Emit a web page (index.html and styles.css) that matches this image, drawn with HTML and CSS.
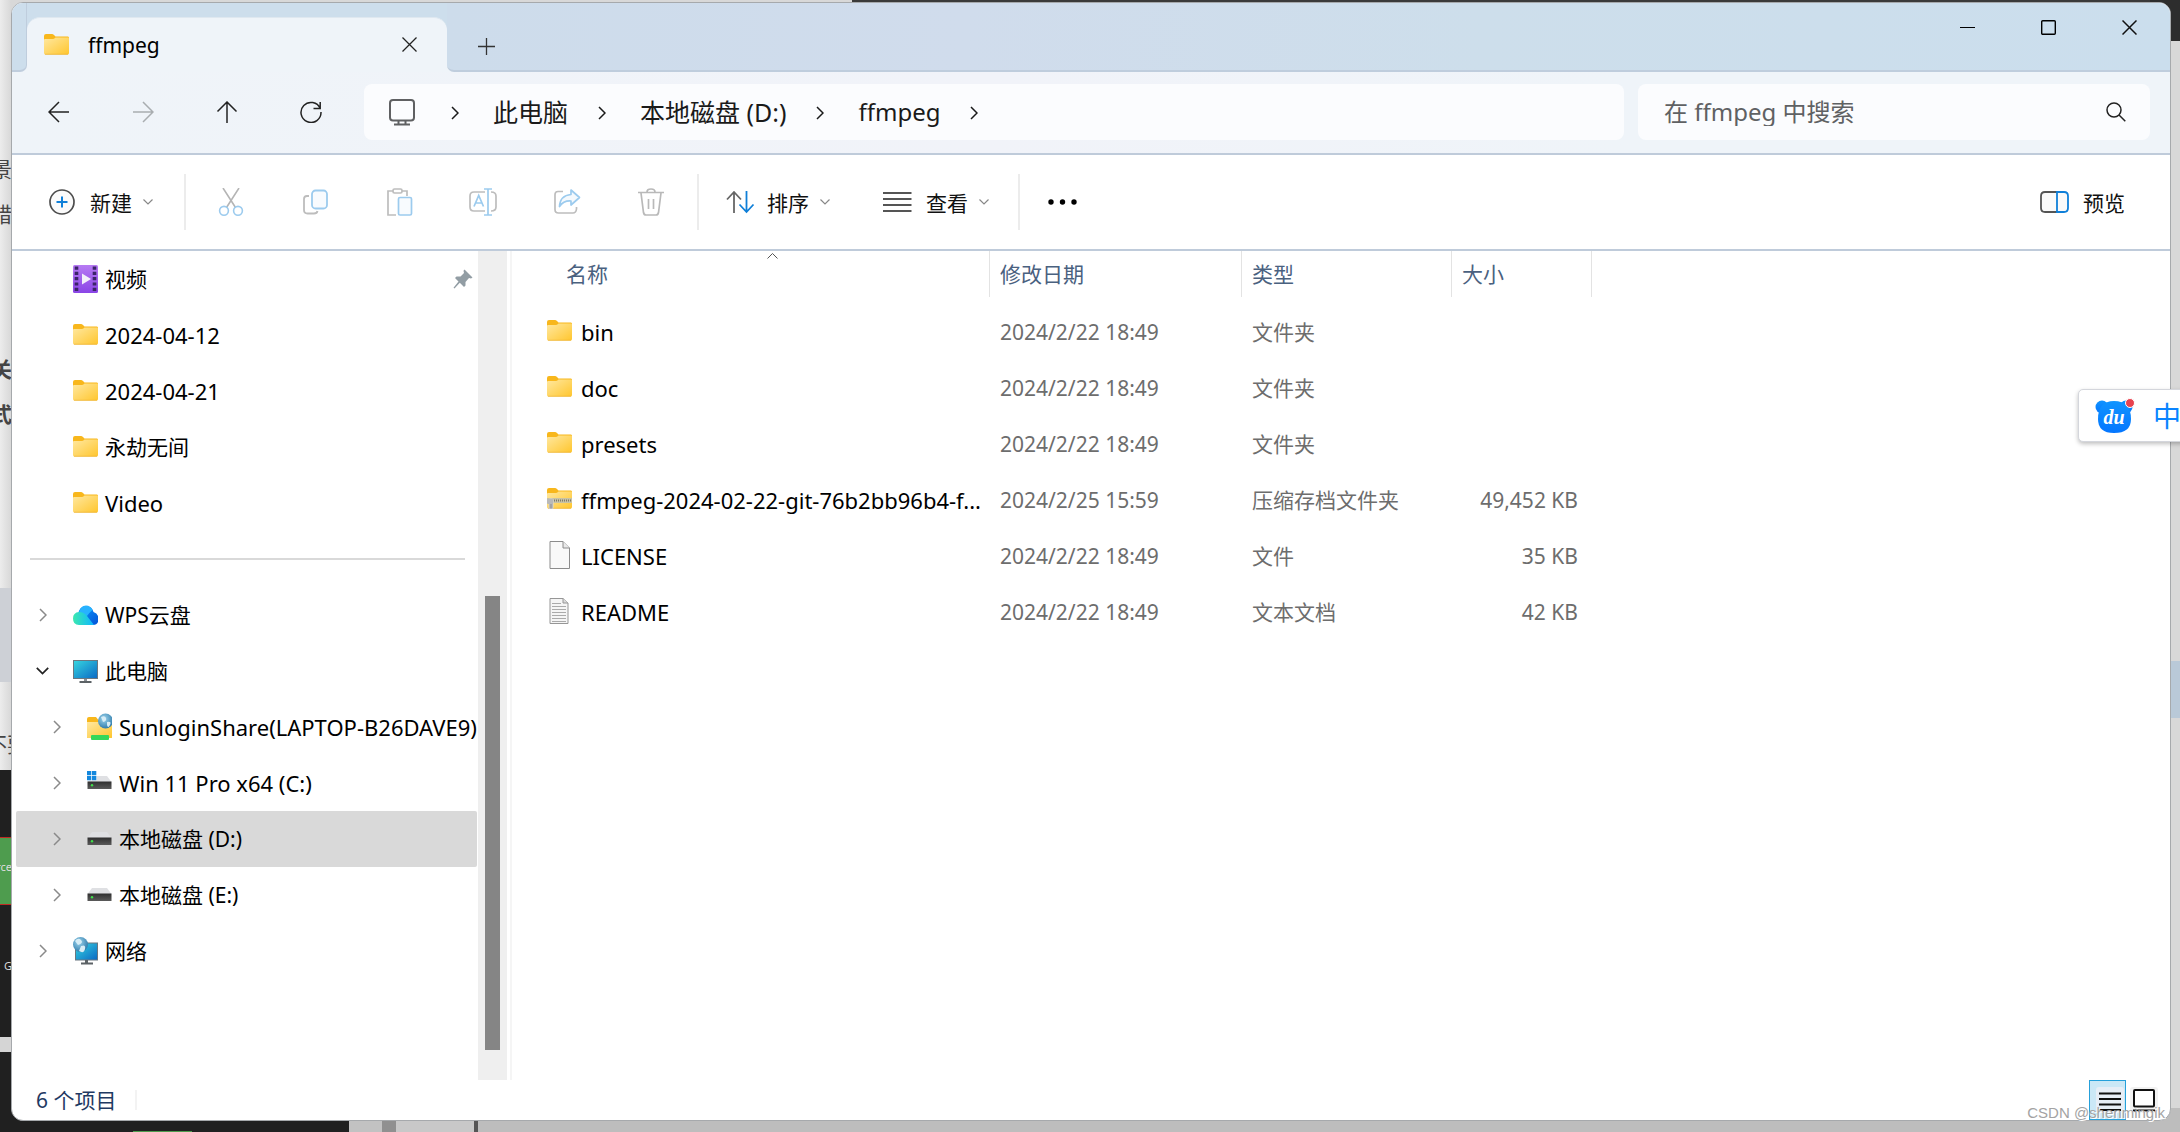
FILE: index.html
```html
<!DOCTYPE html>
<html lang="zh-CN">
<head>
<meta charset="utf-8">
<title>ffmpeg</title>
<link rel="stylesheet" href="styles.css">
</head>
<body>
<svg class="defs" aria-hidden="true">
  <defs>
    <linearGradient id="g-folder" x1="0" y1="0" x2="1" y2="1"><stop offset="0" stop-color="#ffe8a0"/><stop offset="1" stop-color="#ffc62e"/></linearGradient>
    <linearGradient id="g-screen" x1="0" y1="0" x2="1" y2="1"><stop offset="0" stop-color="#36d6e0"/><stop offset="1" stop-color="#0a68c4"/></linearGradient>
    <linearGradient id="g-video" x1="0" y1="0" x2="0" y2="1"><stop offset="0" stop-color="#b77bf3"/><stop offset="1" stop-color="#8a45e6"/></linearGradient>
    <linearGradient id="g-cloud" x1="0" y1="0" x2="1" y2="0"><stop offset="0" stop-color="#3be8b0"/><stop offset="1" stop-color="#0fb6ff"/></linearGradient>
    <linearGradient id="g-cloud2" x1="0" y1="0" x2="1" y2="1"><stop offset="0" stop-color="#0a9cff"/><stop offset="1" stop-color="#0352d6"/></linearGradient>
    <linearGradient id="g-drive" x1="0" y1="0" x2="0" y2="1"><stop offset="0" stop-color="#2f2f2f"/><stop offset="1" stop-color="#5a5a5a"/></linearGradient>
    <radialGradient id="g-globe" cx="0.4" cy="0.35" r="0.7"><stop offset="0" stop-color="#9fd6ee"/><stop offset="1" stop-color="#2a77a8"/></radialGradient>
    <linearGradient id="g-du" x1="0" y1="0" x2="0" y2="1"><stop offset="0" stop-color="#1094ff"/><stop offset="1" stop-color="#0476ff"/></linearGradient>
  </defs>
  <symbol id="folder" viewBox="0 0 25 21">
    <path d="M0 2Q0 0 2 0H8Q9 0 10 1L11.500 2.500H24Q25 2.500 25 4V9H0Z" fill="#f8b71c"/>
    <path d="M0 6Q0 5 1 5H9Q10 5 11 4L11.500 3.500H24Q25 3.500 25 4.500V19Q25 20.500 23.500 20.500H1.500Q0 20.500 0 19Z" fill="url(#g-folder)"/>
    <path d="M1 20.300H24" stroke="#edb02c" stroke-width="0.700"/>
  </symbol>
  <symbol id="zip" viewBox="0 0 25 21">
    <use href="#folder" width="25" height="21"/>
    <path d="M0 10H25V15H0Z" fill="#c9c3a4"/><path d="M5 12.500H25" stroke="#7d7a6c" stroke-width="2" stroke-dasharray="1 1"/>
    <rect x="2" y="11" width="4" height="10" rx="1" fill="#a3a3a3" stroke="#dcdcdc" stroke-width="0.800"/><rect x="0" y="11" width="6" height="5" rx="1" fill="#b9b9b9"/>
  </symbol>
  <symbol id="file" viewBox="0 0 25 28">
    <path d="M3 .5H16L22.500 7V27.500H3Z" fill="#f9f9f9" stroke="#8c8c8c"/><path d="M16 .5V7H22.500" fill="#e9e9e9" stroke="#8c8c8c"/>
  </symbol>
  <symbol id="text" viewBox="0 0 25 28">
    <path d="M3 1.500H16L21 6V26.500H3Z" fill="#f5f5f5" stroke="#969696"/><path d="M16 1.500V6H21" fill="#dadada" stroke="#969696"/>
    <path d="M5 6.500H14M5 9.500H19M5 12.500H19M5 15.500H19M5 18.500H19M5 21.500H19M5 24.500H19" stroke="#aaa"/>
  </symbol>
  <symbol id="drive" viewBox="0 0 25 25">
    <path d="M5 5H20L24.500 11H.5Z" fill="#dfe0e3"/><rect x="0.500" y="10.500" width="24" height="7.500" fill="url(#g-drive)"/><circle cx="5" cy="14.300" r="1.200" fill="#3fe04a"/>
  </symbol>
  <symbol id="pc" viewBox="0 0 25 25">
    <rect x="0.500" y="1.500" width="24" height="18" fill="url(#g-screen)" stroke="#6b7780"/><path d="M11 20H14V22H11Z" fill="#8a8f94"/><rect x="6.500" y="22" width="12" height="2" fill="#5c6266"/>
  </symbol>
  <symbol id="chev" viewBox="0 0 8 14"><path d="M1 1L7 7L1 13" fill="none" stroke="currentColor" stroke-width="1.500"/></symbol>
  <symbol id="down" viewBox="0 0 10 6"><path d="M.5 .5L5 5L9.500 .5" fill="none" stroke="currentColor" stroke-width="1.200"/></symbol>
</svg>

<div class="desktop">
  <div class="backdrop" aria-hidden="true">
    <div class="under-top"></div>
    <div class="under-right"></div>
    <div class="under-patch"></div>
    <div class="under-note"></div>
    <div class="under-dark"><i class="under-green"></i><i class="under-white"></i><i class="under-link"></i></div>
    <div class="under-bottom"></div>
    <span class="frag frag-1">景</span><span class="frag frag-2">错</span><span class="frag frag-3">关</span><span class="frag frag-4">式</span><span class="frag frag-5">不要</span>
    <span class="frag frag-6">rce</span><span class="frag frag-7">G</span>
  </div>

  <main class="window">
    <header class="titlebar">
      <div class="strip strip-left"></div>
      <div class="tab-well">
        <div class="tab">
          <svg class="tab-icon"><use href="#folder"/></svg>
          <span class="tab-name">ffmpeg</span>
          <button class="icon-btn tab-close" aria-label="关闭标签页"><svg width="15" height="15" viewBox="0 0 15 15"><path d="M.5 .5L14.500 14.500M14.500 .5L.5 14.500" stroke="#222" stroke-width="1.300"/></svg></button>
        </div>
      </div>
      <div class="strip strip-rest">
        <button class="icon-btn new-tab" aria-label="新标签页"><svg width="17" height="17" viewBox="0 0 17 17"><path d="M8.500 0V17M0 8.500H17" stroke="#333" stroke-width="1.300"/></svg></button>
        <div class="captions">
          <button class="icon-btn" aria-label="最小化"><svg width="15" height="15" viewBox="0 0 15 15"><path d="M0 7.500H15" stroke="#000"/></svg></button>
          <button class="icon-btn" aria-label="最大化"><svg width="15" height="15" viewBox="0 0 15 15"><rect x="0.700" y="0.700" width="13.600" height="13.600" rx="1" fill="none" stroke="#000" stroke-width="1.400"/></svg></button>
          <button class="icon-btn" aria-label="关闭"><svg width="15" height="15" viewBox="0 0 15 15"><path d="M.5 .5L14.500 14.500M14.500 .5L.5 14.500" stroke="#111" stroke-width="1.500"/></svg></button>
        </div>
      </div>
    </header>

    <nav class="navbar">
      <div class="nav-buttons">
        <button class="icon-btn" aria-label="后退"><svg width="22" height="22" viewBox="0 0 22 22"><path d="M21 11H1M11 1L1 11L11 21" fill="none" stroke="#222" stroke-width="1.500"/></svg></button>
        <button class="icon-btn" aria-label="前进" disabled><svg width="22" height="22" viewBox="0 0 22 22"><path d="M1 11H21M11 1L21 11L11 21" fill="none" stroke="#a9adb0" stroke-width="1.500"/></svg></button>
        <button class="icon-btn" aria-label="向上"><svg width="22" height="22" viewBox="0 0 22 22"><path d="M11 22V1M1.500 10.500L11 1L20.500 10.500" fill="none" stroke="#222" stroke-width="1.500"/></svg></button>
        <button class="icon-btn" aria-label="刷新"><svg width="22" height="22" viewBox="0 0 22 22"><path d="M20.200 7.500A10 10 0 1 0 21 11M20.200 1V7.500H13.500" fill="none" stroke="#222" stroke-width="1.500"/></svg></button>
      </div>
      <div class="address">
        <svg class="monitor" width="26" height="27" viewBox="0 0 26 27"><rect x="1" y="1" width="24" height="20.500" rx="3" fill="none" stroke="#5f6062" stroke-width="2"/><path d="M9.500 22V25M16.500 22V25M5 25.500H21" stroke="#5f6062" stroke-width="2"/></svg>
        <svg class="sep"><use href="#chev"/></svg>
        <a class="crumb" href="#pc">此电脑</a>
        <svg class="sep"><use href="#chev"/></svg>
        <a class="crumb" href="#d">本地磁盘 (D:)</a>
        <svg class="sep"><use href="#chev"/></svg>
        <a class="crumb crumb-here" href="#ffmpeg">ffmpeg</a>
        <svg class="sep"><use href="#chev"/></svg>
      </div>
      <form class="search">
        <input type="search" aria-label="搜索" placeholder="在 ffmpeg 中搜索">
        <button class="icon-btn" type="button" aria-label="搜索"><svg width="20" height="20" viewBox="0 0 20 20"><circle cx="8" cy="8" r="7" fill="none" stroke="#222" stroke-width="1.500"/><path d="M13 13L19.300 19.300" stroke="#222" stroke-width="1.500"/></svg></button>
      </form>
    </nav>

    <div class="commands">
      <button class="cmd cmd-new"><svg width="26" height="26" viewBox="0 0 26 26"><circle cx="13" cy="13" r="12" fill="#fafafa" stroke="#4d4d4d" stroke-width="1.700"/><path d="M13 7.500V18.500M7.500 13H18.500" stroke="#0f7fd8" stroke-width="2"/></svg><span>新建</span><svg class="down"><use href="#down"/></svg></button>
      <div class="tools">
        <button class="tool" aria-label="剪切" disabled><svg width="28" height="28" viewBox="0 0 28 28" fill="none" stroke-width="1.600"><path d="M6 0L18.500 19.500M22 0L9.500 19.500" stroke="#b5b5b5"/><circle cx="7" cy="22.800" r="4.400" stroke="#9ccbee"/><circle cx="21" cy="22.800" r="4.400" stroke="#9ccbee"/></svg></button>
        <button class="tool" aria-label="复制" disabled><svg width="28" height="28" viewBox="0 0 28 28" fill="none" stroke-width="1.800"><path d="M8 8H6Q3 8 3 11V22Q3 25.500 6.500 25.500H13Q16 25.500 16.500 23" stroke="#bdbdbd"/><rect x="11" y="2.500" width="15" height="18" rx="3.500" fill="#f8fbfe" stroke="#9ccbee"/></svg></button>
        <button class="tool" aria-label="粘贴" disabled><svg width="28" height="28" viewBox="0 0 28 28" fill="none" stroke-width="1.700"><path d="M8 3H3V27H11M17 3H22V8" stroke="#bdbdbd"/><rect x="8" y="1" width="9" height="4" rx="1.500" stroke="#bdbdbd"/><rect x="13.500" y="9.500" width="13" height="17.500" rx="1.500" fill="#f8fbfe" stroke="#9ccbee"/></svg></button>
        <button class="tool" aria-label="重命名" disabled><svg width="28" height="28" viewBox="0 0 28 28" fill="none" stroke-width="1.700"><path d="M16 4H5Q1 4 1 8V19Q1 23 5 23H16M22 4Q27 4 27 8V19Q27 23 22 23" stroke="#bdbdbd"/><path d="M5 18.500L9.700 7.500L14.500 18.500M6.500 15H13M19 1V27M15 1H23M15 27H23" stroke="#9ccbee"/></svg></button>
        <button class="tool" aria-label="共享" disabled><svg width="28" height="28" viewBox="0 0 28 28" fill="none" stroke-width="1.700"><path d="M10 3.500H5Q2 3.500 2 6.500V21.500Q2 25 5.500 25H20Q23 25 23.500 21V19" stroke="#bdbdbd"/><path d="M18 2L26.500 9.500L18 17V13Q10.500 12.500 6.500 18.500Q7 7.500 18 6.500Z" fill="#f4f9fd" stroke="#9ccbee" stroke-linejoin="round"/></svg></button>
        <button class="tool" aria-label="删除" disabled><svg width="28" height="28" viewBox="0 0 28 28" fill="none" stroke="#b9b9b9" stroke-width="1.700"><path d="M1 4.500H27M4 5L6.500 24.500Q7 27 9 27H19Q21 27 21.500 24.500L24 5M10 4Q10 1 14 1T18 4M11.500 11V21M16.500 11V21"/></svg></button>
      </div>
      <button class="cmd cmd-sort"><svg width="29" height="24" viewBox="0 0 29 24" fill="none" stroke-width="1.800"><path d="M8 23V2M1 9.500L8 2L15 9.500" stroke="#666"/><path d="M20.500 1V22M13.500 14.500L20.500 22L27.500 14.500" stroke="#0f7fd8"/></svg><span>排序</span><svg class="down"><use href="#down"/></svg></button>
      <button class="cmd cmd-view"><svg width="29" height="20" viewBox="0 0 29 20"><path d="M0 1H28.500M0 7H28.500M0 13H28.500M0 19H28.500" stroke="#555" stroke-width="1.800"/></svg><span>查看</span><svg class="down"><use href="#down"/></svg></button>
      <button class="cmd cmd-more" aria-label="更多"><svg width="29" height="6" viewBox="0 0 29 6"><circle cx="3" cy="3" r="2.700"/><circle cx="14.500" cy="3" r="2.700"/><circle cx="26" cy="3" r="2.700"/></svg></button>
      <button class="cmd cmd-preview"><svg width="29" height="22" viewBox="0 0 29 22" fill="#fafafa" stroke-width="1.800"><path d="M17 1H5Q1 1 1 5V17Q1 21 5 21H17" stroke="#555"/><path d="M17 1H24Q28 1 28 5V17Q28 21 24 21H17Z" stroke="#0f7fd8"/></svg><span>预览</span></button>
    </div>

    <div class="content">
      <aside class="sidebar">
        <ul class="tree">
          <li><a class="node" href="#video"><svg class="node-icon tall" viewBox="0 0 25 28"><rect width="25" height="28" rx="1.500" fill="url(#g-video)"/><path d="M3.500 1.500V28M21.500 1.500V28" stroke="#3b2468" stroke-width="3.600" stroke-dasharray="3.200 2.100"/><path d="M9 8.500L18 14L9 19.500Z" fill="#f3f0fa"/></svg><span>视频</span><svg class="pin" width="20" height="20" viewBox="0 0 20 20"><path d="M11.500 .5L19.500 8.500L18 9.500L16 9L12.500 13L12.500 16.500L11 18L6.800 13.800L1.500 19.500L.5 18.800L5.500 12.500L2 9L3.500 7.500L7.500 7.500L11 4L10.500 1.800Z" fill="#929da4"/></svg></a></li>
          <li><a class="node latin" href="#1"><svg class="node-icon flat"><use href="#folder"/></svg><span>2024-04-12</span></a></li>
          <li><a class="node latin" href="#2"><svg class="node-icon flat"><use href="#folder"/></svg><span>2024-04-21</span></a></li>
          <li><a class="node" href="#3"><svg class="node-icon flat"><use href="#folder"/></svg><span>永劫无间</span></a></li>
          <li><a class="node latin" href="#4"><svg class="node-icon flat"><use href="#folder"/></svg><span>Video</span></a></li>
          <li class="divider"></li>
          <li><a class="node" href="#wps"><svg class="twist"><use href="#chev"/></svg><svg class="node-icon" viewBox="0 0 25 25"><path d="M5 12Q6 3 13 3Q19 3 20.500 9Q26 11 25.500 17Q25 22 20 22H9Z" fill="url(#g-cloud2)"/><path d="M6 10Q7.500 2.500 13 2.500Q17.500 2.500 19.500 7Q17 9 14 13L8 12Z" fill="#27b2ff"/><path d="M6 9Q11 9 14 13L21 22H6Q0 22 0 15.500Q0 9.500 6 9Z" fill="url(#g-cloud)"/></svg><span>WPS云盘</span></a></li>
          <li><a class="node" href="#pc"><svg class="twist twist-open" width="13" height="8" viewBox="0 0 13 8"><path d="M.8 .8L6.500 6.500L12.200 .8" fill="none" stroke="#222" stroke-width="1.700"/></svg><svg class="node-icon"><use href="#pc"/></svg><span>此电脑</span></a></li>
          <li><a class="node sub latin" href="#share"><svg class="twist"><use href="#chev"/></svg><svg class="node-icon tall" viewBox="0 0 25 28"><path d="M0 6Q0 4 2 4H9L11 6.500H25V24Q25 25 24 25H1Q0 25 0 24Z" fill="#f8b71c"/><path d="M0 9H25V24Q25 25 24 25H1Q0 25 0 24Z" fill="url(#g-folder)"/><circle cx="18.500" cy="8" r="7.500" fill="url(#g-globe)"/><path d="M14 4Q18 2 19 5T16 9ZM20 9Q25 8 23 12T20 12Z" fill="#d7edf6"/><rect x="4" y="22" width="18" height="5" rx="1" fill="#35d75a"/></svg><span>SunloginShare(LAPTOP-B26DAVE9)</span></a></li>
          <li><a class="node sub latin" href="#c"><svg class="twist"><use href="#chev"/></svg><svg class="node-icon" viewBox="0 0 25 25"><use href="#drive" y="0" width="25" height="25"/><rect width="9.500" height="9.500" fill="#fff"/><path d="M0 0H4.300V4.300H0ZM5 0H9.300V4.300H5ZM0 5H4.300V9.300H0ZM5 5H9.300V9.300H5Z" fill="#1387dd"/></svg><span>Win 11 Pro x64 (C:)</span></a></li>
          <li><a class="node sub selected" href="#d"><svg class="twist"><use href="#chev"/></svg><svg class="node-icon"><use href="#drive"/></svg><span>本地磁盘 (D:)</span></a></li>
          <li><a class="node sub" href="#e"><svg class="twist"><use href="#chev"/></svg><svg class="node-icon"><use href="#drive"/></svg><span>本地磁盘 (E:)</span></a></li>
          <li><a class="node" href="#net"><svg class="twist"><use href="#chev"/></svg><svg class="node-icon tall" viewBox="0 0 25 28"><rect x="2.500" y="6" width="22" height="17" fill="url(#g-screen)" stroke="#6b7780"/><path d="M12 23H15V26H12ZM8 25.500H20V27.500H8Z" fill="#5c6266"/><circle cx="7.500" cy="7.500" r="7.500" fill="url(#g-globe)"/><path d="M2 4Q5 0 8 3T5 8ZM8 9Q13 7 12 12T6 14Z" fill="#d7edf6"/></svg><span>网络</span></a></li>
        </ul>
        <div class="scrollbar"><div class="thumb"></div></div>
      </aside>

      <section class="files">
        <table>
          <colgroup><col class="c-name"><col class="c-date"><col class="c-type"><col class="c-size"></colgroup>
          <thead>
            <tr><th class="sorted" scope="col">名称<svg class="caret" width="11" height="6" viewBox="0 0 11 6"><path d="M.5 5.500L5.500 .5L10.500 5.500" fill="none" stroke="#555"/></svg></th><th scope="col">修改日期</th><th scope="col">类型</th><th scope="col">大小</th></tr>
          </thead>
          <tbody>
            <tr><td><div class="file"><svg class="file-icon"><use href="#folder"/></svg><span>bin</span></div></td><td>2024/2/22 18:49</td><td>文件夹</td><td></td></tr>
            <tr><td><div class="file"><svg class="file-icon"><use href="#folder"/></svg><span>doc</span></div></td><td>2024/2/22 18:49</td><td>文件夹</td><td></td></tr>
            <tr><td><div class="file"><svg class="file-icon"><use href="#folder"/></svg><span>presets</span></div></td><td>2024/2/22 18:49</td><td>文件夹</td><td></td></tr>
            <tr><td><div class="file"><svg class="file-icon"><use href="#zip"/></svg><span>ffmpeg-2024-02-22-git-76b2bb96b4-f...</span></div></td><td>2024/2/25 15:59</td><td>压缩存档文件夹</td><td>49,452 KB</td></tr>
            <tr><td><div class="file"><svg class="file-icon page"><use href="#file"/></svg><span>LICENSE</span></div></td><td>2024/2/22 18:49</td><td>文件</td><td>35 KB</td></tr>
            <tr><td><div class="file"><svg class="file-icon page"><use href="#text"/></svg><span>README</span></div></td><td>2024/2/22 18:49</td><td>文本文档</td><td>42 KB</td></tr>
          </tbody>
        </table>
      </section>
    </div>

    <footer class="status">
      <span class="count">6 个项目</span>
      <button class="view-btn active" aria-label="详细信息"><svg width="28" height="26" viewBox="0 0 28 26"><rect width="28" height="26" rx="3" fill="#e7eef6"/><path d="M3 6.500H25M3 12H25M3 17.500H25M3 23H25" stroke="#111" stroke-width="1.800"/></svg></button>
      <button class="view-btn" aria-label="大图标"><svg width="28" height="26" viewBox="0 0 28 26"><rect width="28" height="26" rx="3" fill="#f2f2f2"/><rect x="4" y="3" width="20" height="16.500" rx="1" fill="#fff" stroke="#111" stroke-width="2"/><path d="M3 23.500H25" stroke="#111" stroke-width="1.800"/></svg></button>
    </footer>
  </main>

  <div class="ime">
    <svg width="40" height="36" viewBox="0 0 40 36"><circle cx="7" cy="9" r="6.500" fill="url(#g-du)"/><circle cx="31" cy="9" r="6.500" fill="url(#g-du)"/><path d="M19 3Q36 3 36 21Q36 35 19 35Q3 35 3 21Q3 3 19 3Z" fill="url(#g-du)"/><circle cx="35" cy="5" r="4.500" fill="#e8434f" stroke="#fff"/><text x="19" y="26" class="du" text-anchor="middle">du</text></svg>
    <span>中</span>
  </div>
  <div class="watermark">CSDN @shenmingik</div>
</div>
</body>
</html>
```
FILE: styles.css
```css
* { box-sizing: border-box; }

body {
  margin: 0;
  font-family: "Noto Sans", "Noto Sans CJK SC", sans-serif;
  font-size: 21px;
  line-height: 28px;
  color: #000;
}

button { font: inherit; color: inherit; background: none; border: 0; padding: 0; }
a { color: inherit; text-decoration: none; }
svg { display: block; flex: none; }
.defs { position: absolute; width: 0; height: 0; }

.desktop {
  position: relative;
  display: flex;
  min-height: 100vh;
  padding: 2px 9px 11px 11px;
  overflow: hidden;
  background: #dcdcdc;
}

/* windows that show round the edges of the explorer */
.backdrop, .backdrop > * { position: absolute; }
.backdrop { inset: 0; overflow: hidden; background: linear-gradient(90deg, #ececec, #d8d8d8 11px); }
.under-top { top: 0; left: 852px; right: 0; height: 12px; background: #3a3a3a; }
.under-right { top: 0; right: 0; width: 30px; height: 41px; background: #2d2d2d; }
.under-patch { top: 661px; right: 0; width: 30px; height: 57px; background: #b9c9d8; }
.under-note { top: 588px; left: 0; width: 30px; height: 94px; background: #cdd0d6; }
.under-dark { top: 770px; bottom: 0; left: 0; width: 349px; background: #202020; }
.under-dark i { position: absolute; left: 0; width: 30px; }
.under-green { top: 67px; height: 68px; background: #4e9c4e; border-block: 1px solid #c02a22; }
.under-white { top: 267px; height: 15px; background: #d5d5d5; }
.under-dark .under-link { left: 133px; bottom: 0; width: 59px; height: 1px; background: #4e9c4e; }
.under-bottom { left: 349px; right: 0; bottom: 0; height: 24px; background: linear-gradient(90deg, #c2c2c2 33px, #909090 33px 47px, #c8c8c8 47px 125px, #555 125px 129px, #bdbdbd 129px); }
.frag { right: calc(100% - 12px); color: #444; white-space: nowrap; }
.frag-1 { top: 155px; }
.frag-2 { top: 200px; }
.frag-3 { top: 355px; font-weight: 700; }
.frag-4 { top: 400px; font-weight: 700; }
.frag-5 { top: 730px; right: calc(100% - 28px); }
.frag-6, .frag-7 { color: #ddd; font-size: 11px; }
.frag-6 { top: 853px; }
.frag-7 { top: 952px; }

.window {
  position: relative;
  flex: 1;
  display: flex;
  flex-direction: column;
  min-width: 0;
  background: #fff;
  border: 1px solid #a6a9ac;
  border-radius: 12px;
  overflow: hidden;
}

/* title bar */
.titlebar { display: flex; height: 69px; background: #eff4f9; }
.strip { background: #cddeec; border-bottom: 2px solid #bfcddd; }
.strip-left { width: 15px; border-right: 1px solid #bfcddd; border-bottom-right-radius: 7px; }
.strip-rest {
  flex: 1;
  display: flex;
  align-items: flex-start;
  justify-content: space-between;
  border-bottom-left-radius: 7px;
  background: linear-gradient(90deg, #cddceb, #d0dcec 30%, #cddeeb 60%, #cbdeed);
}
.tab-well { width: 420px; padding-top: 14px; background: linear-gradient(#cddeec 35px, #eff4f9 35px); }
.tab {
  display: flex;
  align-items: center;
  height: 55px;
  padding: 0 30px 2px 17px;
  background: #eff4f9;
  border-top: 1px solid #dfe8f0;
  border-radius: 13px 13px 0 0;
}
.tab-icon { width: 25px; height: 21px; margin-right: 19px; }
.tab-name { padding-top: 2px; }
.tab-close { margin-left: auto; }
.icon-btn { display: flex; align-items: center; justify-content: center; }
.new-tab { margin: 35px 0 0 31px; }
.captions { display: flex; padding: 17px 33px 0 0; gap: 66px; }

/* navigation */
.navbar {
  display: flex;
  align-items: center;
  height: 83px;
  padding: 0 20px 1px 36px;
  background: linear-gradient(90deg, #eff4f9, #f1f3f9 45%, #eff4f9 75%);
  border-bottom: 2px solid #bfcbda;
  font-size: 24px;
}
.nav-buttons { display: flex; gap: 62px; width: 316px; }
.address, .search { display: flex; align-items: center; height: 56px; background: #fbfcfe; border-radius: 8px; }
.address { flex: 1; padding-left: 25px; color: #1a1a1a; font-size: 25px; }
.crumb-here { font-size: 24px; }
.sep { width: 8px; height: 14px; margin: 2px 34px 0 30px; }
.monitor + .sep { margin-left: 36px; }
.search { width: 512px; margin-left: 14px; padding: 0 24px 0 26px; }
.search input {
  flex: 1;
  min-width: 0;
  padding: 0;
  border: 0;
  outline: 0;
  background: none;
  font: inherit;
}
.search input::placeholder { color: #5f6163; opacity: 1; }

/* command bar */
.commands { display: flex; align-items: center; height: 96px; border-bottom: 2px solid #bfcbda; }
.cmd { display: flex; align-items: center; height: 56px; color: #111; }
.cmd span { margin: 2px 11px 0 14px; }
.down { width: 10px; height: 6px; color: #888; }
.cmd-new { width: 174px; padding-left: 37px; border-right: 2px solid #ececec; }
.cmd-new span { margin-left: 15px; }
.tools { display: flex; align-items: center; gap: 56px; height: 56px; width: 513px; padding-left: 31px; border-right: 2px solid #ececec; }
.tool { height: 28px; }
.cmd-sort { width: 157px; padding-left: 27px; }
.cmd-sort span { margin-left: 12px; }
.cmd-view { width: 164px; padding-left: 27px; border-right: 2px solid #ececec; }
.cmd-more { padding-left: 28px; }
.cmd-preview { margin: 0 34px 0 auto; }
.cmd-preview span { margin-right: 11px; }

/* body */
.content { flex: 1; display: flex; min-height: 0; }
.sidebar { display: flex; width: 500px; border-right: 2px solid #f5f5f5; padding-right: 3px; }
.tree { flex: 1; min-width: 0; margin: 0; padding: 0 1px 0 4px; list-style: none; }
.node { display: flex; align-items: center; height: 56px; padding-left: 57px; border-radius: 2px; white-space: nowrap; }
.node.sub { padding-left: 71px; }
.node.latin { font-size: 22px; }
.node.selected { background: #d9d9d9; }
.node-icon { width: 25px; height: 25px; margin-right: 7px; }
.node-icon.tall { height: 28px; }
.node-icon.flat { height: 21px; margin-bottom: 2px; }
.twist { width: 8px; height: 14px; margin: 0 26px 0 -34px; color: #8a8a8a; }
.twist-open { width: 13px; height: 8px; margin: 0 24px 0 -37px; }
.pin { margin-left: auto; margin-right: 4px; }
.divider { display: flex; align-items: center; height: 56px; padding: 0 12px 0 14px; }
.divider::before { content: ""; flex: 1; height: 2px; background: #d9d9d9; }
.scrollbar { width: 29px; background: #efefef; padding: 345px 7px 0; }
.thumb { width: 15px; height: 454px; background: #858585; }

/* file list */
.files { flex: 1; min-width: 0; padding-left: 35px; }
table { width: 1045px; table-layout: fixed; border-collapse: separate; border-spacing: 0; }
.c-name { width: 443px; }
.c-date { width: 252px; }
.c-type { width: 210px; }
.c-size { width: 140px; }
th {
  height: 46px;
  padding: 0 0 0 10px;
  border-right: 1px solid #e3e3e3;
  color: #4a617f;
  font-weight: 400;
  text-align: left;
}
th.sorted { position: relative; padding-left: 19px; }
.caret { position: absolute; left: 220px; top: 2px; }
tbody::before { content: ""; display: block; height: 7px; }
td { height: 56px; padding: 0 0 0 10px; color: #6d6d6d; white-space: nowrap; }
td:first-child { padding-left: 0; color: #000; font-size: 22px; }
td:last-child { padding-right: 14px; text-align: right; }
.file { display: flex; align-items: center; }
.file-icon { width: 25px; height: 21px; margin: 0 9px 3px 0; }
.file-icon.page { height: 28px; }

/* status bar */
.status { display: flex; align-items: center; height: 40px; padding-right: 8px; color: #1f3a63; }
.count { margin-right: auto; padding: 0 19px 0 24px; border-right: 2px solid #f3f3f3; line-height: 20px; }
.view-btn { display: flex; align-items: flex-end; justify-content: flex-end; width: 37px; height: 40px; padding: 0 1px 6px; border: 1px solid transparent; }
.view-btn.active { background: #cbe8f6; border-color: #26a0da; }
.view-btn:last-child { width: 36px; padding-right: 3px; }

.ime {
  position: absolute;
  top: 389px;
  right: -30px;
  display: flex;
  align-items: center;
  width: 132px;
  height: 53px;
  padding-left: 16px;
  background: #fff;
  border: 1px solid #d4d6dc;
  border-radius: 5px;
  box-shadow: 0 2px 4px rgba(0, 0, 0, 0.25);
  color: #0a84ff;
  font-size: 28px;
}
.ime span { margin-left: 18px; }
.du { font: italic 700 20px "Liberation Serif", serif; fill: #fff; }

.watermark {
  position: absolute;
  right: 15px;
  bottom: 8px;
  color: #a3a3a3;
  font: 15px/22px "Liberation Sans", sans-serif;
  text-shadow: 1px 1px 0 #fff;
}
```
